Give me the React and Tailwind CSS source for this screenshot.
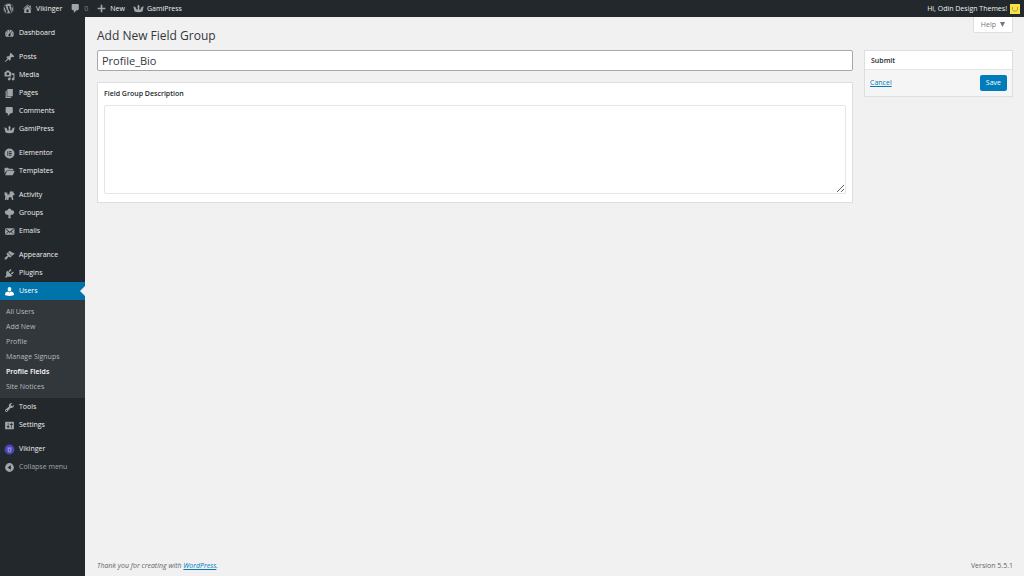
import { FaWordpress } from "react-icons/fa"

// admin icons, all drawn on a 20x20 grid
const paths = {
    dashboard: "M3.76 16h12.48c1.1-1.37 1.76-3.11 1.76-5 0-4.42-3.58-8-8-8s-8 3.58-8 8c0 1.89.66 3.63 1.76 5zM10 4c.55 0 1 .45 1 1s-.45 1-1 1-1-.45-1-1 .45-1 1-1zM6 6c.55 0 1 .45 1 1s-.45 1-1 1-1-.45-1-1 .45-1 1-1zm8 0c.55 0 1 .45 1 1s-.45 1-1 1-1-.45-1-1 .45-1 1-1zm-5.37 5.55L12 7v6c0 1.1-.9 2-2 2s-2-.9-2-2c0-.57.24-1.08.63-1.45zM4 10c.55 0 1 .45 1 1s-.45 1-1 1-1-.45-1-1 .45-1 1-1zm12 0c.55 0 1 .45 1 1s-.45 1-1 1-1-.45-1-1 .45-1 1-1z",
    post: "M10.44 3.02l1.82-1.82 6.36 6.35-1.83 1.82c-1.05-.68-2.48-.57-3.41.36l-.75.75c-.92.93-1.04 2.35-.35 3.41l-1.83 1.82-2.41-2.41-2.8 2.79c-.42.42-3.38 2.71-3.8 2.29s1.86-3.39 2.28-3.81l2.79-2.79L4.1 9.36l1.83-1.82c1.05.69 2.48.57 3.4-.36l.75-.75c.93-.92 1.05-2.35.36-3.41z",
    media: "M13 11V4c0-.55-.45-1-1-1h-1.67L9 1H5L3.67 3H2c-.55 0-1 .45-1 1v7c0 .55.45 1 1 1h10c.55 0 1-.45 1-1zM7 4.5c1.38 0 2.5 1.12 2.5 2.5S8.38 9.5 7 9.5 4.5 8.38 4.5 7 5.62 4.5 7 4.5zM14 6h5v10.5c0 1.38-1.12 2.5-2.5 2.5S14 17.88 14 16.5s1.12-2.5 2.5-2.5c.17 0 .34.02.5.05V9h-3V6zm-4 8.05V13h2v3.5c0 1.38-1.12 2.5-2.5 2.5S7 17.88 7 16.5 8.12 14 9.5 14c.17 0 .34.02.5.05z",
    page: "M6 15V2h10v13H6zm-1 1h8v2H3V5h2v11z",
    comments: "M5 2h9c1.1 0 2 .9 2 2v7c0 1.1-.9 2-2 2h-2l-5 5v-5H5c-1.1 0-2-.9-2-2V4c0-1.1.9-2 2-2z",
    gamipress: "M10 2.5l2 3.5-.9 5.5 2.4.3 1.7-4.3L19.5 6l-2.3 9.5c-2 1-4.500 1.500-7.200 1.500s-5.200-.5-7.200-1.500L.5 6l4.300 1.500 1.700 4.300 2.400-.3L8 6z",
    elementor: "M10 1a9 9 0 1 0 0 18 9 9 0 0 0 0-18zM6.2 6h1.6v8H6.2zM9.2 6h4.6v1.6H9.2zM9.2 9.2h4.6v1.6H9.2zM9.2 12.4h4.6V14H9.2z",
    templates: "M1 13.5V4.5C1 3.7 1.7 3 2.5 3H7l2 2h6.5c.8 0 1.5.7 1.5 1.5V8H6c-1 0-1.8.5-2.3 1.4zM2 17l3.1-7.3c.3-.5.7-.8 1.2-.8h13.2L16.3 16c-.3.6-.8 1-1.5 1z",
    activity: "M1 4h2l1 2 1-2h1v4h4V5l2-3 1 1.5L14 1l1 2.5L17 2v3l2 2v2l-3 1v3l1 5h-2.5L13 13H9l-1 5H5.5v-4L4 18H1.5l1-6L1 8z",
    groups: "M10 1c2 0 3.2 1.5 3.2 3.3C15.5 3.5 18.5 5 18.5 7.500c0 3-2.800 5-6 4.800L11.500 14.500l1 4h-5l1-4-1-2.200c-3.200.2-6-1.800-6-4.800C1.500 5 4.500 3.500 6.800 4.300 6.800 2.500 8 1 10 1z",
    email: "M19 14.5v-9c0-.83-.67-1.5-1.5-1.5H3.49c-.83 0-1.5.67-1.5 1.5v9c0 .83.67 1.5 1.5 1.5H17.5c.83 0 1.5-.67 1.5-1.5zm-1.31-9.11c.33.33.15.67-.03.84L13.6 9.95l3.9 4.06c.12.14.2.36.06.51-.13.16-.43.15-.56.05l-4.37-3.73-2.14 1.95-2.13-1.95-4.37 3.73c-.13.1-.43.11-.56-.05-.14-.15-.06-.37.06-.51l3.9-4.06-4.06-3.72c-.18-.17-.36-.51-.03-.84s.67-.17.95.07l6.24 5.04 6.25-5.04c.28-.24.62-.4.95-.07z",
    appearance: "M14.48 11.06L7.41 3.99l1.5-1.5c.5-.56 2.3-.47 3.51.32 1.21.8 1.43 1.28 2.91 2.1 1.18.64 2.45 1.26 4.45.85zm-.71.71L6.7 4.7 4.93 6.47c-.39.39-.39 1.02 0 1.41l1.06 1.06c.39.39.39 1.03 0 1.42-.6.6-1.43 1.11-2.21 1.69-.35.26-.7.53-1.01.84C1.43 14.23.4 16.08 1.4 17.07c.99 1 2.84-.03 4.18-1.36.31-.31.58-.66.85-1.02.57-.78 1.08-1.61 1.69-2.21.39-.39 1.02-.39 1.41 0l1.06 1.06c.39.39 1.02.39 1.41 0z",
    plugins: "M13.11 4.36L9.87 7.6 8 5.73l3.24-3.24c.35-.34 1.05-.2 1.56.32.52.51.66 1.21.31 1.55zm-8 1.77l.91-1.12 9.01 9.01-1.19.84c-.71.71-2.63 1.16-3.82 1.16H6.14L4.9 17.26c-.59.59-1.54.59-2.12 0-.59-.58-.59-1.53 0-2.12l1.24-1.24v-3.88c0-1.13.4-3.19 1.09-3.89zm7.26 3.97l3.24-3.24c.34-.35 1.04-.21 1.55.31.52.51.66 1.21.31 1.55l-3.24 3.25z",
    users: "M10 10c-2.5 0-3.300-2.500-3.300-4.200C6.700 3.500 8 2 10 2s3.300 1.500 3.300 3.800C13.300 7.500 12.500 10 10 10zm0 1.600L12.600 10c2.700 0 5.400 2.300 5.400 4.500V17s-4 1.200-8 1.200S2 17 2 17v-2.500C2 12.300 4.700 10 7.400 10z",
    tools: "M16.68 9.77c-1.34 1.34-3.3 1.67-4.95.99l-5.41 6.52c-.99.99-2.59.99-3.58 0s-.99-2.59 0-3.57l6.52-5.42c-.68-1.65-.35-3.61.99-4.95 1.28-1.28 3.12-1.62 4.72-1.06l-2.89 2.89 2.82 2.82 2.86-2.87c.53 1.58.18 3.39-1.08 4.65zM3.81 16.21c.4.39 1.04.39 1.43 0 .4-.4.4-1.04 0-1.43-.39-.4-1.03-.4-1.43 0-.39.39-.39 1.03 0 1.43z",
    settings: "M18 16V4c0-.55-.45-1-1-1H3c-.55 0-1 .45-1 1v12c0 .55.45 1 1 1h14c.55 0 1-.45 1-1zM8 11h1c.55 0 1 .45 1 1s-.45 1-1 1H8v1.5c0 .28-.22.5-.5.5s-.5-.22-.5-.5V13H6c-.55 0-1-.45-1-1s.45-1 1-1h1V5.5c0-.28.22-.5.5-.5s.5.22.5.5V11zm5-2h-1c-.55 0-1-.45-1-1s.45-1 1-1h1V5.5c0-.28.22-.5.5-.5s.5.22.5.5V7h1c.55 0 1 .45 1 1s-.45 1-1 1h-1v5.5c0 .28-.22.5-.5.5s-.5-.22-.5-.5V9z",
    home: "M16 8.5l1.53 1.53-1.06 1.06L10 4.6l-6.47 6.49-1.06-1.06L10 2.5l4 4v-2h2v4zm-6-2.46l6 5.99V18H4v-5.97zM12 17v-5H8v5h4z",
    plus: "M8.5 3h3v5.5H17v3h-5.5V17h-3v-5.5H3v-3h5.5z",
    collapse: "M10 2a8 8 0 1 0 0 16 8 8 0 0 0 0-16zm2.5 4v8L6.5 10z",
}

function Icon({ name }) {
    if (name === "vikinger") {
        return (
            <svg viewBox="0 0 20 20" className="size-[11px] shrink-0">
                <circle cx="10" cy="10" r="9" fill="#4b45b5" />
                <path d="M6.5 5l1 2.5C8 6 9 5.5 10 5.5s2 .5 2.5 2l1-2.5v7c0 2-1.5 3.5-3.5 3.5S6.5 14 6.5 12z" fill="#8f8bd8" />
                <path d="M9 9h2v4H9z" fill="#4b45b5" />
            </svg>
        )
    }
    return (
        <svg viewBox="0 0 20 20" className="size-[11px] shrink-0" fill="currentColor" fillRule="evenodd">
            <path d={paths[name]} />
        </svg>
    )
}

const menu = [
    [{ icon: "dashboard", label: "Dashboard" }],
    [
        { icon: "post", label: "Posts" },
        { icon: "media", label: "Media" },
        { icon: "page", label: "Pages" },
        { icon: "comments", label: "Comments" },
        { icon: "gamipress", label: "GamiPress" },
    ],
    [
        { icon: "elementor", label: "Elementor" },
        { icon: "templates", label: "Templates" },
    ],
    [
        { icon: "activity", label: "Activity" },
        { icon: "groups", label: "Groups" },
        { icon: "email", label: "Emails" },
    ],
    [
        { icon: "appearance", label: "Appearance" },
        { icon: "plugins", label: "Plugins" },
        {
            icon: "users",
            label: "Users",
            children: ["All Users", "Add New", "Profile", "Manage Signups", "Profile Fields", "Site Notices"],
        },
        { icon: "tools", label: "Tools" },
        { icon: "settings", label: "Settings" },
    ],
    [{ icon: "vikinger", label: "Vikinger" }],
]

function TopBar() {
    return (
        <header className="flex h-[17px] items-center justify-between bg-[#23282d] pr-1 pl-[3px] text-[#eee]">
            <nav className="flex items-center gap-2">
                <a href="#" aria-label="WordPress" className="text-[#a0a5aa]"><FaWordpress className="size-[11px]" /></a>
                <a href="#" className="flex items-center gap-[3px]"><span className="text-[#a0a5aa]"><Icon name="home" /></span>Vikinger</a>
                <a href="#" className="flex items-center gap-[3px] text-[#a0a5aa]"><Icon name="comments" /><span className="text-[#82878c]">0</span></a>
                <a href="#" className="flex items-center gap-[3px]"><span className="text-[#a0a5aa]"><Icon name="plus" /></span>New</a>
                <a href="#" className="flex items-center gap-[3px]"><span className="text-[#a0a5aa]"><Icon name="gamipress" /></span>GamiPress</a>
            </nav>
            <a href="#" className="flex items-center gap-[3px]">
                Hi, Odin Design Themes!
                <svg viewBox="0 0 10 10" className="size-[10px]">
                    <path d="M0 0h10v10H0z" fill="#f7e04b" />
                    <path d="M2.5 3v2.2c0 1.3 1 2 2.5 2s2.5-.7 2.5-2V3" fill="none" stroke="#b39d3e" />
                </svg>
            </a>
        </header>
    )
}

function MenuItem({ item }) {
    const active = Boolean(item.children)
    return (
        <li>
            <a href="#" className={active
                ? "relative flex h-[18px] items-center gap-1 bg-[#0073aa] pl-1 text-white"
                : "flex h-[18px] items-center gap-1 pl-1 text-[#eee]"}>
                <span className={active ? "text-white" : "text-[#a0a5aa]"}><Icon name={item.icon} /></span>
                {item.label}
                {active && <span className="absolute top-1 right-0 border-y-[5px] border-r-[5px] border-y-transparent border-r-[#f1f1f1]" />}
            </a>
            {active && (
                <ul className="bg-[#32373c] py-1 pl-[6px] text-[#b4b9be]">
                    {item.children.map((child) => (
                        <li key={child} className="h-[15px] leading-[15px]">
                            <a href="#" className={child === "Profile Fields" ? "font-semibold text-white" : ""}>{child}</a>
                        </li>
                    ))}
                </ul>
            )}
        </li>
    )
}

function Sidebar() {
    return (
        <aside className="w-[85px] shrink-0 bg-[#23282d] pt-[7px]">
            <nav className="flex flex-col gap-[6px]">
                {menu.map((group, i) => (
                    <ul key={i}>
                        {group.map((item) => <MenuItem key={item.label} item={item} />)}
                    </ul>
                ))}
            </nav>
            <button type="button" className="flex h-[18px] items-center gap-1 pl-1 text-[#a0a5aa]">
                <Icon name="collapse" />
                Collapse menu
            </button>
        </aside>
    )
}

function App() {
    return (
        <div className="flex min-h-screen flex-col bg-[#f1f1f1] font-['Open_Sans',sans-serif] text-[7px] leading-[10px] text-[#444]">
            <TopBar />
            <div className="flex flex-1">
                <Sidebar />
                <main className="flex min-w-0 flex-1 flex-col pr-[11px] pl-3">
                    <div className="flex items-start justify-between">
                        <h1 className="pt-[10px] text-[12px] leading-[18px] text-[#32373c]">Add New Field Group</h1>
                        <button type="button" className="flex h-4 items-center gap-1 rounded-b-xs border border-t-0 border-[#dcdee0] bg-white px-[7px] text-[#72777c]">
                            Help
                            <svg viewBox="0 0 5 5" className="size-[5px]" fill="currentColor"><path d="M0 0h5L2.5 5z" /></svg>
                        </button>
                    </div>

                    <form className="mt-[5px] flex items-start gap-[11px]" onSubmit={(e) => e.preventDefault()}>
                        <div className="min-w-0 flex-1">
                            <input
                                type="text"
                                aria-label="Field Group Name"
                                defaultValue="Profile_Bio"
                                className="block h-[21px] w-full rounded-xs border border-[#a5a9ad] bg-white px-1 text-[11px] text-[#32373c]"
                            />
                            <section className="mt-[11px] border border-[#dcdee0] bg-white px-[6px] pb-2">
                                <label htmlFor="description" className="block py-[6px] font-semibold text-[#23282d]">Field Group Description</label>
                                <textarea id="description" className="block h-[89px] w-full rounded-xs border border-[#e5e5e5] bg-white p-1" />
                            </section>
                        </div>
                        <section className="w-[149px] shrink-0 border border-[#dcdee0] bg-[#f5f5f5]">
                            <h2 className="border-b border-[#e5e5e5] bg-white px-[6px] pt-[5px] pb-[3px] font-semibold text-[#23282d]">Submit</h2>
                            <div className="flex items-center justify-between p-[5px]">
                                <a href="#" className="text-[#007cba] underline">Cancel</a>
                                <button type="submit" className="h-4 rounded-xs bg-[#007cba] px-[6px] text-white">Save</button>
                            </div>
                        </section>
                    </form>

                    <footer className="mt-auto flex justify-between pb-[5px] text-[#666]">
                        <p className="italic">Thank you for creating with <a href="#" className="text-[#007cba] underline">WordPress</a>.</p>
                        <p>Version 5.5.1</p>
                    </footer>
                </main>
            </div>
        </div>
    )
}

export default App
